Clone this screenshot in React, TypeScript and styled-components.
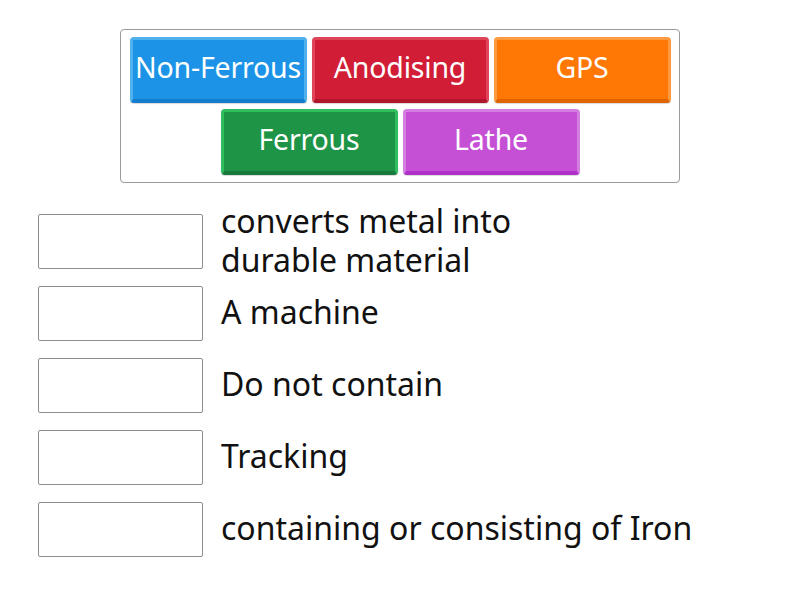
import React from "react";
import styled, { createGlobalStyle } from "styled-components";

const Global = createGlobalStyle`
  html, body { margin: 0; padding: 0; background: #fff; }
  body { font-family: "Noto Sans", "Open Sans", sans-serif; }
`;

const Page = styled.div`
  width: 800px;
  height: 600px;
  padding-top: 29px;
  box-sizing: border-box;
  overflow: hidden;
`;

const Bank = styled.div`
  width: 560px;
  margin: 0 auto;
  box-sizing: border-box;
  border: 1px solid #9a9a9a;
  border-radius: 4px;
  padding: 7px 8px;
  display: flex;
  flex-wrap: wrap;
  justify-content: center;
  gap: 6px 5px;
`;

type Tone = { face: string; light: string; dark: string };

const Tile = styled.div<{ $t: Tone }>`
  width: 177px;
  height: 66px;
  box-sizing: border-box;
  border-radius: 4px;
  background: ${(p) => p.$t.face};
  border: 3px solid ${(p) => p.$t.light};
  border-bottom: 4px solid ${(p) => p.$t.dark};
  box-shadow: 0 1px 1px rgba(0, 0, 0, 0.15);
  color: #fff;
  font-size: 28.5px;
  padding-bottom: 5px;
  display: flex;
  align-items: center;
  justify-content: center;
  white-space: nowrap;
  letter-spacing: -0.2px;
`;

const List = styled.div`
  margin-top: 31px;
  padding-left: 38px;
  display: flex;
  flex-direction: column;
  gap: 17px;
`;

const Row = styled.div`
  display: flex;
  align-items: center;
  gap: 18px;
  height: 55px;
`;

const Slot = styled.div`
  width: 165px;
  height: 55px;
  flex: none;
  box-sizing: border-box;
  border: 1px solid #8c8c8c;
  border-radius: 2px;
  background: #fff;
`;

const Clue = styled.div<{ $wide?: boolean }>`
  font-size: 32px;
  line-height: 39px;
  padding-bottom: 4px;
  color: #111;
  width: ${(p) => (p.$wide ? "auto" : "320px")};
  white-space: ${(p) => (p.$wide ? "nowrap" : "normal")};
`;

const tones: Record<string, Tone> = {
  blue: { face: "#1c93e6", light: "#4fb0ee", dark: "#137ccc" },
  red: { face: "#d11d36", light: "#e04458", dark: "#b0162b" },
  orange: { face: "#ff7806", light: "#ff9a40", dark: "#e06400" },
  green: { face: "#1e9447", light: "#2fbf60", dark: "#177a39" },
  purple: { face: "#c550d6", light: "#d57ee2", dark: "#b02fc8" },
};

const tiles = [
  { label: "Non-Ferrous", tone: "blue" },
  { label: "Anodising", tone: "red" },
  { label: "GPS", tone: "orange" },
  { label: "Ferrous", tone: "green" },
  { label: "Lathe", tone: "purple" },
];

const clues = [
  "converts metal into durable material",
  "A machine",
  "Do not contain",
  "Tracking",
  "containing or consisting of Iron",
];

export default function App() {
  return (
    <Page>
      <Global />
      <Bank>
        {tiles.map((t) => (
          <Tile key={t.label} $t={tones[t.tone]}>
            {t.label}
          </Tile>
        ))}
      </Bank>
      <List>
        {clues.map((c, i) => (
          <Row key={i}>
            <Slot />
            <Clue $wide={i === 4}>{c}</Clue>
          </Row>
        ))}
      </List>
    </Page>
  );
}
